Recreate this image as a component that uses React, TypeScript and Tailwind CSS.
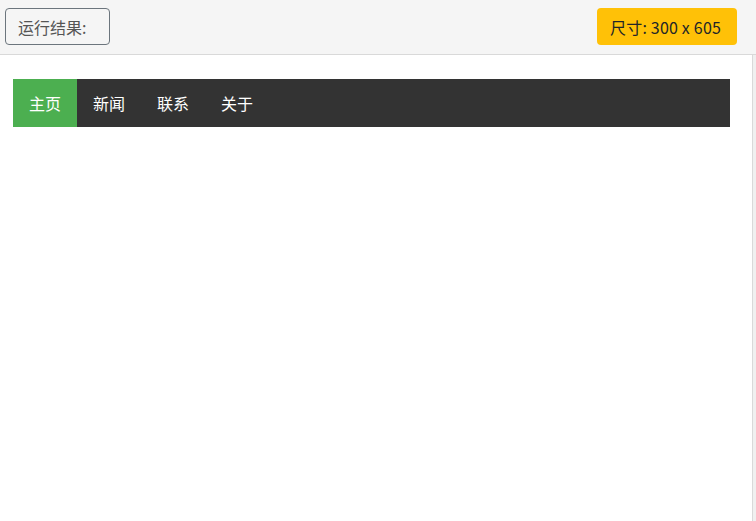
import React from "react";

const items = ["主页", "新闻", "联系", "关于"];

const App = () => {
  return (
    <div
      className="w-[756px] h-[521px] bg-white flex flex-col overflow-hidden"
      style={{ fontFamily: '"Noto Sans CJK SC", "Noto Sans", sans-serif' }}
    >
      <div className="h-[55px] shrink-0 bg-[#f5f5f5] border-b border-[#d9d9d9] flex items-start justify-between pl-[5px] pr-[19px] pt-[8px]">
        <button className="h-[37px] w-[105px] rounded-[4px] border border-[#6c757d] text-[#555] text-[16px] leading-none flex items-center justify-start pl-[12px]">
          运行结果:
        </button>
        <div className="h-[37px] w-[140px] rounded-[4px] bg-[#ffc107] text-[#212529] text-[16px] leading-none flex items-center justify-start pl-[13px] tracking-[0.2px]">
          尺寸: 300 x 605
        </div>
      </div>
      <div className="flex-1 flex">
        <div className="w-[753px] border-r border-[#d9d9d9] pt-[24px] pl-[13px]">
          <ul className="w-[717px] h-[48px] bg-[#333] flex">
            {items.map((t, i) => (
              <li
                key={t}
                className={
                  i === 0
                    ? "w-[64px] flex items-center justify-center bg-[#4CAF50] text-white text-[16px]"
                    : "w-[64px] flex items-center justify-center text-white text-[16px]"
                }
              >
                {t}
              </li>
            ))}
          </ul>
        </div>
        <div className="flex-1 bg-[#f0f0f0]" />
      </div>
    </div>
  );
};

export default App;
